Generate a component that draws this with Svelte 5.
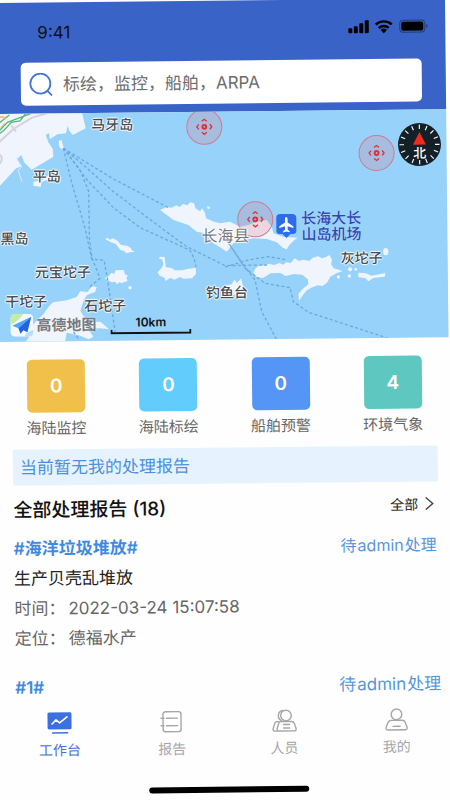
<script lang="ts">
	type Pin = { text: string; x: number; y: number; kind?: string };

	const MAP_W = 449;
	const MAP_H = 228;

	const places: Pin[] = [
		{ text: '马牙岛', x: 115, y: 12 },
		{ text: '平岛', x: 49, y: 63 },
		{ text: '黑岛', x: 16, y: 125 },
		{ text: '元宝坨子', x: 64, y: 159 },
		{ text: '干坨子', x: 27, y: 188 },
		{ text: '石坨子', x: 106, y: 193 },
		{ text: '长海县', x: 227, y: 124, kind: 'county' },
		{ text: '钓鱼台', x: 228, y: 181 },
		{ text: '灰坨子', x: 363, y: 148 },
		{ text: '长海大长\n山岛机场', x: 333, y: 116, kind: 'airport' }
	];

	const cameras = [
		{ x: 207, y: 15 },
		{ x: 379, y: 43 },
		{ x: 257, y: 108 }
	];

	const stats = [
		{ label: '海陆监控', count: 0, color: 'yellow' },
		{ label: '海陆标绘', count: 0, color: 'sky' },
		{ label: '船舶预警', count: 0, color: 'blue' },
		{ label: '环境气象', count: 4, color: 'teal' }
	];

	const tabs = [
		{ id: 'work', label: '工作台' },
		{ id: 'report', label: '报告' },
		{ id: 'people', label: '人员' },
		{ id: 'mine', label: '我的' }
	];

	const ticks = Array.from({ length: 16 }, (_, i) => i * 22.5);

	let keyword = $state('');
	let active = $state('work');

	function place(p: { x: number; y: number }) {
		return `left: ${(p.x / MAP_W) * 100}%; top: ${(p.y / MAP_H) * 100}%`;
	}
</script>

<div class="screen">
	<div class="page">
		<header>
			<div class="status-bar">
				<span class="time">9:41</span>
				<svg width="82" height="16" viewBox="0 0 82 16" aria-hidden="true">
					<rect x="1" y="9" width="4" height="5" rx="1" />
					<rect x="6.5" y="7" width="4" height="7" rx="1" />
					<rect x="12" y="4" width="4" height="10" rx="1" />
					<rect x="17.5" y="1" width="4" height="13" rx="1" />
					<g fill="none" stroke="#000" stroke-width="2.4">
						<path d="M28.5 5.5a12 12 0 0 1 16 0" />
						<path d="M31.5 9a7.5 7.5 0 0 1 10 0" />
					</g>
					<path d="M33.3 11a4.8 4.8 0 0 1 6.4 0l-3.2 3.2z" />
					<rect x="52.5" y="1.5" width="25" height="12" rx="3.5" fill="none" stroke="#000" stroke-opacity="0.4" />
					<rect x="54" y="3" width="22" height="9" rx="2" />
					<path d="M79 5.5v4q1.5-.5 1.5-2t-1.5-2" fill-opacity="0.4" />
				</svg>
			</div>
			<label class="search">
				<svg width="24" height="24" viewBox="0 0 24 24" fill="none" stroke="#4476d6" stroke-width="1.8" stroke-linecap="round">
					<circle cx="11.5" cy="11" r="10" />
					<path d="M18.5 18.5l4 4" />
				</svg>
				<input type="text" bind:value={keyword} placeholder="标绘，监控，船舶，ARPA" aria-label="搜索" />
			</label>
		</header>

		<div class="map">
			<svg class="base" viewBox="0 0 1347 684" aria-hidden="true">
				<g transform="translate(9 -27) rotate(.6)">
					<g class="land">
						<path d="M-20 20H245L257 70 218 90 208 78 203 62 198 85 172 88 150 102 146 84 137 90 145 112 158 132 160 155 95 194 72 172 64 150 50 162 66 184 48 190 0 242-20 250z" />
						<path d="M176 108l8-4 4 14 3 12-8 2-6-8zM100 230l26-4 20-16 6 10-28 12-2 14-22-4z" />
						<path d="M480 315l20-9 15 2 14-7 10 5 10-9 13 4 8-9 12 3 4 15 14 9 6-9 8 12 4 18 24 10 18 5 30-5 30 15 25-5 25-10 30-5 15 20 5 20 30 10 42 3-12 10-12 12-8 13-12-5-18-16-30-10-40-2-30 5-30 10-20 25-12-8-28-17-25-30-25-5-25-20-45-15-20-15z" />
						<path d="M620 304l8 1 2 5-6 2z" />
						<g transform="translate(0 360)">
							<path d="M315 42l8-4 6 6 10-4 14 8 10 12 18 2 12 8 2 6 10 4-14 2-12 3-8-8-10-2-14-18-16-6zM313 160l14-8 6-8 10 2 4-10 24-1 4 14 8 1-4 10 4 8-18 6-8-2-6 6-6-8-10 2z" />
							<path d="M472 142l12-12 6-12-3-14-11-4 4-5 14 1 3 30 20 4 6 6 24 0 14-4 26-4 1 18-12 14-25 1-12-5-16 8-12-6-14 10-4-10-14-6z" />
							<circle cx="390" cy="188" r="5" />
							<path d="M76 352l10-15 14-40 30-30 20-27 10-8 40-6 30-10 10-17 22 2 14-17 14 2-5 15-24 9-10 15-10 33 14 22 20 10 26 0 26 23-28-3-34 1 5 10 10 14-14 8-30-12-36-8-6 32z" />
						</g>
						<g transform="translate(675 360)">
							<path d="M90 132l14-13 15 4 12-7 16 4 16-6 12 5 8-7 14 2 12-14 12 8 14-4 18 4 10-10 16-4 12 6 12-4 10-6 8 14-3 14 8 12 16 4 10 5-18 6-18 10-10 18-14 10-14-2-16 6-16 8-12 14-12 18-2-20 12-14 18-16-2-14-16-14-26-2-24 6-16-9-30 1-22 14-18-2-12-12z" />
							<path d="M400 143l20 1 20 8 41-8-2 11-34 4-15 10-10-10-20-2zM0 182l20-4 8-14 8 10 12-14 6 24 10 14-26 8-38 10z" />
							<circle cx="375" cy="133" r="6" />
							<circle cx="392" cy="133" r="4" />
							<circle cx="373" cy="153" r="5" />
							<circle cx="340" cy="156" r="5" />
							<ellipse cx="482" cy="80" rx="8" ry="11" />
						</g>
					</g>
					<g class="roads">
						<path class="green" d="M-20 96L22 52 60 38 98 24M-10 92L12 76 34 52 60 48 78 24M-10 60L28 30" />
						<path class="orange" d="M-10 36h20l8 6M2 68l12-12" />
						<path class="grey" d="M-10 118L40 72 96 38 160 20M-4 148q16 8 4 28M34 62l14 18" />
						<path class="pier" d="M50 160l14 28-10 8 12 34" />
					</g>
					<g class="routes">
						<path d="M190 130L340 222 505 308" />
						<path d="M190 130L250 180 340 260 485 370 560 425 675 482 800 480" />
						<path d="M190 130L262 226 340 308 420 368 570 436 582 460 588 486" />
						<path d="M190 130L214 230 255 370 275 462 312 466 322 520 345 680" />
						<path d="M190 130L240 195 266 260 268 400 276 460 300 520 270 545M220 680l14 20" />
						<path d="M675 400L735 486 765 525 785 620 830 705M675 486L745 465 805 455 855 464" />
						<path d="M690 420L735 490 795 535 870 548 880 590 925 622 1165 700" />
					</g>
				</g>
			</svg>

			{#each cameras as camera}
				<svg class="pin" style={place(camera)} width="38" height="38" viewBox="0 0 38 38">
					<circle cx="19" cy="19" r="17.5" fill="#e0707f" fill-opacity="0.22" stroke="#d2798f" />
					<g fill="none" stroke="#df3038" stroke-width="1.3">
						<circle cx="19" cy="19" r="1.9" stroke-width="2" />
						<path d="M16.5 13.5l2.5-2 2.5 2M16.5 24.5l2.5 2 2.5-2M13.500 16.500l-2 2.500 2 2.500M24.500 16.500l2 2.500-2 2.500" />
					</g>
				</svg>
			{/each}

			<svg class="pin" style={place({ x: 288, y: 115 })} width="22" height="26" viewBox="0 0 22 26">
				<path d="M5 1h12q4 0 4 4v13q0 3-3 3h-3l-4 4-4-4H4q-3 0-3-3V5q0-4 4-4z" fill="#2e6bea" />
				<path d="M11 4q1.300 0 1.300 2v3.500l5.700 3.800v1.700l-5.700-1.800v3.500l2 1.500v1.200L11 18.600l-3.300.8v-1.200l2-1.500v-3.500L4 15v-1.700l5.700-3.800V6q0-2 1.300-2z" fill="#fff" />
			</svg>

			{#each places as p}
				<span class="pin place {p.kind ?? ''}" style={place(p)}>{p.text}</span>
			{/each}

			<div class="compass pin" style={place({ x: 422, y: 35 })}>
				<svg width="44" height="44" viewBox="0 0 44 44">
					<circle cx="22" cy="22" r="21.5" fill="#142027" />
					{#each ticks as deg}
						<path d="M22 2v4.500" stroke="#fff" stroke-width="1.1" transform="rotate({deg} 22 22)" />
					{/each}
					<path d="M22 9.500L28.500 22h-13z" fill="#ef2b20" />
				</svg>
				<span>北</span>
			</div>

			<div class="brand">
				<svg width="23" height="23" viewBox="0 0 23 23">
					<rect width="23" height="23" rx="5" fill="#f3f8fb" />
					<path d="M0 5q0-5 5-5h8Q9 7 0 11z" fill="#c5eba5" />
					<path d="M14 23q1-5 9-7v2q0 5-5 5z" fill="#b9def8" />
					<path d="M21 3L2 12l6 2.500z" fill="#4fa4fb" />
					<path d="M21 3L8 14.500 10 20l3-3.500 4 2z" fill="#2264de" />
				</svg>
				<span>高德地图</span>
			</div>

			<div class="scale">
				10km
				<svg width="81" height="5" viewBox="0 0 81 5">
					<path d="M1 0v3.500h79V0" fill="none" stroke="#111" stroke-width="2" />
				</svg>
			</div>
		</div>

		<section class="stats">
			{#each stats as stat}
				<button class="stat">
					<span class="count {stat.color}">{stat.count}</span>
					<span class="stat-label">{stat.label}</span>
				</button>
			{/each}
		</section>

		<p class="notice">当前暂无我的处理报告</p>

		<section class="reports">
			<div class="row heading">
				<h2>全部处理报告 (18)</h2>
				<a href="#all">
					全部
					<svg width="10" height="14" viewBox="0 0 10 14" fill="none" stroke="#444" stroke-width="1.4">
						<path d="M1.500 1l7 6-7 6" />
					</svg>
				</a>
			</div>

			<article>
				<div class="row">
					<h3>#海洋垃圾堆放#</h3>
					<span class="state">待<span class="user">admin</span>处理</span>
				</div>
				<p class="summary">生产贝壳乱堆放</p>
				<p><span class="key">时间：</span>2022-03-24 15:07:58</p>
				<p><span class="key">定位：</span>德福水产</p>
			</article>

			<article>
				<div class="row">
					<h3>#1#</h3>
					<span class="state large">待<span class="user">admin</span>处理</span>
				</div>
			</article>
		</section>

		<nav>
			{#each tabs as tab}
				<button class="tab" class:active={active === tab.id} onclick={() => (active = tab.id)}>
					<svg width="26" height="24" viewBox="0 0 26 24" fill="none" stroke="currentColor" stroke-width="1.4" stroke-linecap="round" stroke-linejoin="round">
						{#if tab.id === 'work'}
							<rect x="1" y="1" width="24" height="17" rx="1.5" fill="#3d70df" stroke="none" />
							<path d="M5.500 12.500l4-4 3.500 3 7.500-6" stroke="#fff" stroke-width="1.6" />
							<path d="M6 21.500h15" stroke="#3d70df" stroke-width="1.6" />
						{:else if tab.id === 'report'}
							<rect x="4.5" y="1.5" width="18" height="20" rx="2.5" />
							<path d="M8 8h11M8 15.500h11M2.500 8h3M2.500 15.500h3" />
						{:else if tab.id === 'people'}
							<circle cx="14.5" cy="6.5" r="5.3" />
							<path d="M11 1.500a5.300 5.300 0 0 0-1 10" />
							<path d="M9 12.500h11q2 0 2.800 2l1.700 5q.5 2.500-2 2.500H7.500q-2.500 0-2-2.500l1.500-5q.5-2 2-2zM7 12.500H5q-1.500.5-2 2.500l-1.500 4.500q-.5 2.500 2 2.500H7M12 15.500h6M12 19h6" />
						{:else}
							<circle cx="13" cy="6.5" r="5.3" />
							<path d="M7.500 12.500h11q2.500 0 3.500 3l1.500 4q.5 2.500-2 2.500H4.500q-2.500 0-2-2.500l1.500-4q1-3 3.500-3zM9.500 18.500h7" />
						{/if}
					</svg>
					<span>{tab.label}</span>
				</button>
			{/each}
		</nav>
		<div class="home-bar"></div>
	</div>
</div>

<style>
	:global(body) {
		background: #fefefe;
	}

	.screen {
		min-height: 100vh;
		overflow: hidden;
		font-family: Inter, 'Noto Sans CJK SC', sans-serif;
		color: #111;
	}

	.page {
		margin: 3px 5px 0 -4px;
		transform: rotate(-0.6deg);
		transform-origin: 0 0;
	}

	button {
		padding: 0;
		border: 0;
		background: none;
		font: inherit;
		cursor: pointer;
	}

	h2,
	h3,
	p {
		margin: 0;
	}

	header {
		padding: 18px 24px 8px;
		background: #3963c7;
	}

	.status-bar {
		display: flex;
		justify-content: space-between;
		align-items: center;
		height: 24px;
		margin-bottom: 18px;
		padding-left: 17px;
		font-size: 17px;
	}

	.status-bar svg {
		margin-right: -8px;
		margin-bottom: 4px;
	}

	.search {
		display: flex;
		align-items: center;
		gap: 10px;
		height: 43px;
		padding: 0 8px;
		border-radius: 5px;
		background: #fff;
	}

	.search input {
		flex: 1;
		min-width: 0;
		padding: 0;
		border: 0;
		outline: 0;
		background: none;
		font: inherit;
		font-size: 17px;
	}

	.search input::placeholder {
		color: #6c6c6c;
		opacity: 1;
	}

	.map {
		position: relative;
		overflow: hidden;
		aspect-ratio: 449 / 228;
		background: #96d2fa;
	}

	.base {
		display: block;
		width: 100%;
		height: 100%;
	}

	.land {
		fill: #f0f4fd;
	}

	.roads,
	.routes {
		fill: none;
		stroke-width: 4;
	}

	.green {
		stroke: #58b878;
	}

	.orange {
		stroke: #f1b75c;
	}

	.grey {
		stroke: #d6d2dc;
		stroke-width: 6;
	}

	.pier {
		stroke: #dbe9f8;
		stroke-width: 3;
	}

	.routes {
		stroke: #6ca8de;
		stroke-width: 4;
		stroke-dasharray: 9 7;
	}

	.pin {
		position: absolute;
		transform: translate(-50%, -50%);
	}

	.place {
		white-space: pre;
		font-size: 14px;
		font-weight: 500;
		line-height: 16px;
		color: #484b52;
		text-shadow:
			1px 0 1px #fff,
			-1px 0 1px #fff,
			0 1px 1px #fff,
			0 -1px 1px #fff;
	}

	.county {
		font-size: 16px;
		font-weight: 400;
		color: #77777b;
	}

	.airport {
		font-size: 15px;
		color: #3046b4;
		text-shadow: 0 0 1px #d4eafb;
	}

	.compass svg {
		display: block;
	}

	.compass span {
		position: absolute;
		left: 0;
		right: 0;
		top: 22px;
		text-align: center;
		font-size: 13px;
		font-weight: 500;
		line-height: 16px;
		color: #fff;
	}

	.brand {
		position: absolute;
		left: 11px;
		bottom: 5px;
		display: flex;
		align-items: center;
		gap: 3px;
		font-size: 15px;
		font-weight: 700;
		line-height: 20px;
		color: #76797f;
		text-shadow: 0 0 2px #fff;
	}

	.scale {
		position: absolute;
		left: 111px;
		bottom: 6px;
		display: flex;
		flex-direction: column;
		align-items: center;
		font-size: 12px;
		font-weight: 600;
		line-height: 14px;
	}

	.stats {
		display: grid;
		grid-template-columns: repeat(4, 1fr);
		padding: 18px 0 11px;
	}

	.stat {
		display: flex;
		flex-direction: column;
		align-items: center;
		gap: 6px;
	}

	.count {
		width: 58px;
		border-radius: 5px;
		font-size: 19px;
		font-weight: 600;
		line-height: 53px;
		color: #fff;
	}

	.yellow {
		background: #f0c04b;
	}

	.sky {
		background: #62cdfc;
	}

	.blue {
		background: #5595f5;
	}

	.teal {
		background: #5ec8c0;
	}

	.stat-label {
		font-size: 15px;
		line-height: 20px;
		color: #666;
	}

	.notice {
		margin: 0 12px;
		padding: 0 7px;
		border-radius: 2px;
		background: #e6f3fe;
		font-size: 17px;
		line-height: 36px;
		color: #4c90dc;
	}

	.reports {
		padding: 0 14px 0 12px;
	}

	.row {
		display: flex;
		justify-content: space-between;
		align-items: center;
	}

	.heading {
		height: 44px;
	}

	h2 {
		font-size: 19px;
		font-weight: 500;
	}

	.heading a {
		display: flex;
		align-items: center;
		gap: 6px;
		padding-right: 2px;
		font-size: 14px;
		color: #222;
		text-decoration: none;
	}

	article {
		padding-top: 4px;
		margin-bottom: 15px;
		font-size: 17px;
		line-height: 30px;
		color: #666;
	}

	article:last-child {
		margin-bottom: 0;
	}

	h3 {
		font-size: 17px;
		font-weight: 600;
		color: #3f8ae0;
	}

	.summary {
		color: #222;
	}

	.key {
		margin-right: 3px;
	}

	.state {
		font-size: 16px;
		color: #5597dc;
	}

	.large {
		margin-right: -3px;
		font-size: 17px;
	}

	.user {
		margin: 0 1px;
	}

	nav {
		display: grid;
		grid-template-columns: repeat(4, 1fr);
		padding-top: 9px;
	}

	.tab {
		display: flex;
		flex-direction: column;
		align-items: center;
		gap: 5px;
		font-size: 14px;
		line-height: 20px;
		color: #a6a6aa;
	}

	.active {
		color: #4a72cf;
	}

	.home-bar {
		width: 160px;
		height: 6px;
		margin: 28px auto 5px;
		border-radius: 3px;
		background: #000;
	}
</style>
